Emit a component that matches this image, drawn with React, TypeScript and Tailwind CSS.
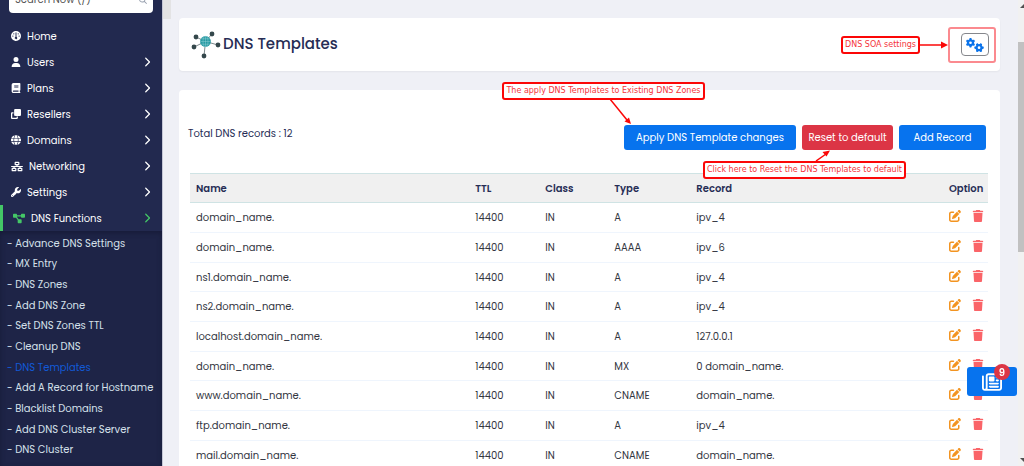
import {
    FaBook,
    FaChevronRight,
    FaClone,
    FaDiagramProject,
    FaGauge,
    FaGears,
    FaGlobe,
    FaMagnifyingGlass,
    FaNetworkWired,
    FaPenToSquare,
    FaRegNewspaper,
    FaTrash,
    FaUser,
    FaWrench,
} from 'react-icons/fa6'
import clsx from 'clsx'
import type { ReactNode } from 'react'
import type { IconType } from 'react-icons'

type MenuItem = {
    label: string
    icon: IconType
    wide?: boolean
    active?: boolean
    leaf?: boolean
}

const menu: MenuItem[] = [
    { label: 'Home', icon: FaGauge, leaf: true },
    { label: 'Users', icon: FaUser },
    { label: 'Plans', icon: FaBook },
    { label: 'Resellers', icon: FaClone },
    { label: 'Domains', icon: FaGlobe },
    { label: 'Networking', icon: FaNetworkWired, wide: true },
    { label: 'Settings', icon: FaWrench },
    { label: 'DNS Functions', icon: FaDiagramProject, wide: true, active: true },
]

const dnsLinks = [
    'Advance DNS Settings',
    'MX Entry',
    'DNS Zones',
    'Add DNS Zone',
    'Set DNS Zones TTL',
    'Cleanup DNS',
    'DNS Templates',
    'Add A Record for Hostname',
    'Blacklist Domains',
    'Add DNS Cluster Server',
    'DNS Cluster',
]

const records = [
    { name: 'domain_name.', type: 'A', record: 'ipv_4' },
    { name: 'domain_name.', type: 'AAAA', record: 'ipv_6' },
    { name: 'ns1.domain_name.', type: 'A', record: 'ipv_4' },
    { name: 'ns2.domain_name.', type: 'A', record: 'ipv_4' },
    { name: 'localhost.domain_name.', type: 'A', record: '127.0.0.1' },
    { name: 'domain_name.', type: 'MX', record: '0 domain_name.' },
    { name: 'www.domain_name.', type: 'CNAME', record: 'domain_name.' },
    { name: 'ftp.domain_name.', type: 'A', record: 'ipv_4' },
    { name: 'mail.domain_name.', type: 'CNAME', record: 'domain_name.' },
]

function Sidebar() {
    return (
        <aside className="flex w-[163px] shrink-0 flex-col border-r border-[#c5c7d6] bg-[#22294f] text-white">
            <div className="mx-[9px] -mt-3.5 mb-2.5 flex h-[27px] shrink-0 items-center rounded bg-white px-1.5">
                <input
                    type="search"
                    aria-label="Search"
                    placeholder="Search Now (/)"
                    className="min-w-0 flex-1 text-[10px] outline-none placeholder:text-[#555]"
                />
                <FaMagnifyingGlass className="size-2 text-gray-400" />
            </div>
            <nav className="flex flex-1 flex-col">
                {menu.map(({ label, icon: Icon, wide, active, leaf }) => (
                    <a
                        key={label}
                        href="#"
                        className={clsx(
                            'flex h-[26px] shrink-0 items-center pr-2.5 text-[10px]',
                            active
                                ? 'border-l-3 border-[#44c767] pl-2.5'
                                : 'pl-[11px]'
                        )}
                    >
                        <Icon
                            className={clsx(
                                'mr-1.5 shrink-0',
                                wide ? 'h-[11px] w-3' : 'size-2.5',
                                active && 'text-[#44c767]'
                            )}
                        />
                        <span className="flex-1">{label}</span>
                        {!leaf && (
                            <FaChevronRight
                                className={clsx(
                                    'size-2.5',
                                    active && 'text-[#44c767]'
                                )}
                            />
                        )}
                    </a>
                ))}
                <ul className="grid flex-1 auto-rows-fr bg-[#1e2447] pt-0.5 pb-1.5 pl-[7px] text-[10px] text-[#d5e0ea] shadow-[inset_0_2px_5px_#171b38]">
                    {dnsLinks.map((link) => (
                        <li key={link} className="flex items-center">
                            <a
                                href="#"
                                className={clsx(
                                    link === 'DNS Templates' && 'text-[#1259d6]'
                                )}
                            >
                                - {link}
                            </a>
                        </li>
                    ))}
                </ul>
            </nav>
        </aside>
    )
}

function DnsLogo() {
    const nodes = [
        [21, 4],
        [5, 7],
        [3, 17],
        [27, 15],
        [13, 26],
    ]
    return (
        <svg viewBox="0 0 30 29" className="h-[29px] w-[30px]" aria-hidden="true">
            <g stroke="#5d6b70" strokeWidth="0.8">
                {nodes.map(([x, y]) => (
                    <line key={x} x1="14.5" y1="11.5" x2={x} y2={y} />
                ))}
            </g>
            <g fill="#34474b">
                {nodes.map(([x, y]) => (
                    <circle key={x} cx={x} cy={y} r="2.4" />
                ))}
            </g>
            <circle cx="14.5" cy="11.5" r="5.4" fill="#269aa3" />
            <g fill="none" stroke="#a5dade" strokeWidth="0.4">
                <ellipse cx="14.5" cy="11.5" rx="2.5" ry="5.2" />
                <path d="M14.5 6.2v10.6M9.2 11.5h10.6M10.2 8.8h8.6M10.2 14.2h8.6" />
            </g>
        </svg>
    )
}

function Callout({
    className,
    children,
}: {
    className: string
    children: ReactNode
}) {
    return (
        <span
            className={clsx(
                "absolute z-10 flex h-[18px] items-center justify-center rounded-[3px] border-2 border-[#fb0707] bg-white font-['DejaVu_Sans',sans-serif] text-[8px] whitespace-nowrap text-[#f5333a]",
                className
            )}
        >
            {children}
        </span>
    )
}

function PageHeader() {
    return (
        <header className="flex h-[53px] shrink-0 items-center justify-between rounded bg-white pr-1 pl-3 shadow-xs">
            <h1 className="flex items-center gap-0.5 text-[15px] font-medium text-[#262d55]">
                <DnsLogo />
                DNS Templates
            </h1>
            <div className="relative flex h-9 w-12 items-center justify-end rounded-[3px] border-2 border-[#fb8a8f] pr-[5px]">
                <Callout className="right-[74px] w-[79px]">
                    DNS SOA settings
                </Callout>
                <svg
                    viewBox="0 0 30 8"
                    className="absolute right-[46px] h-2 w-[30px]"
                    aria-hidden="true"
                >
                    <path d="M0 4h24" stroke="#fb0707" strokeWidth="1.5" />
                    <path d="M23 0.5v7l7-3.5z" fill="#fb0707" />
                </svg>
                <button
                    type="button"
                    aria-label="DNS SOA settings"
                    className="flex h-[23px] w-7 items-center justify-center rounded border border-[#85878c] text-[#0a73eb]"
                >
                    <FaGears className="size-[18px]" />
                </button>
            </div>
        </header>
    )
}

function Toolbar() {
    return (
        <div className="flex items-center justify-between pr-0.5">
            <p className="-ml-0.5 pb-2 text-[10px] text-[#262d55]">
                Total DNS records : 12
            </p>
            <div className="relative flex gap-1.5 text-[10px] text-white">
                <Callout className="right-[281px] bottom-[50px] w-[203px]">
                    The apply DNS Templates to Existing DNS Zones
                </Callout>
                <svg
                    viewBox="0 0 24 26"
                    className="absolute right-[353px] bottom-[25px] h-[26px] w-6"
                    aria-hidden="true"
                >
                    <path d="M1 0l17 21" stroke="#fb0707" strokeWidth="1.5" />
                    <path d="M22 25l-6.500-2.500 4.500-4z" fill="#fb0707" />
                </svg>
                <button
                    type="button"
                    className="h-[25px] w-[172px] rounded-[3px] bg-[#0773ee]"
                >
                    Apply DNS Template changes
                </button>
                <button
                    type="button"
                    className="h-[25px] w-[91px] rounded-[3px] bg-[#dc3545]"
                >
                    Reset to default
                </button>
                <button
                    type="button"
                    className="h-[25px] w-[87px] rounded-[3px] bg-[#0773ee]"
                >
                    Add Record
                </button>
                <svg
                    viewBox="0 0 16 11"
                    className="absolute top-[25px] right-[155px] h-[11px] w-4"
                    aria-hidden="true"
                >
                    <path d="M1 11l10-7" stroke="#fb0707" strokeWidth="1.5" />
                    <path d="M15 0.500l-3.500 6-4-4.500z" fill="#fb0707" />
                </svg>
                <Callout className="top-9 right-20 w-[203px]">
                    Click here to Reset the DNS Templates to default
                </Callout>
            </div>
        </div>
    )
}

function RecordsTable() {
    return (
        <table className="mt-[23px] w-full table-fixed text-left text-[10px] text-[#33363f]">
            <thead className="border-y border-[#cfe3e4] bg-[#f0f0f0] text-[#262d55]">
                <tr className="h-[29px] [&>th]:px-1.5 [&>th]:font-semibold">
                    <th className="w-[35%]">Name</th>
                    <th className="w-[70px]">TTL</th>
                    <th className="w-[69px]">Class</th>
                    <th className="w-[82px]">Type</th>
                    <th>Record</th>
                    <th className="w-[45px]">Option</th>
                </tr>
            </thead>
            <tbody>
                {records.map(({ name, type, record }, i) => (
                    <tr
                        key={i}
                        className="h-[30px] border-b border-[#eff5fd] nth-[3n]:h-[29px] [&>td]:px-1.5"
                    >
                        <td>{name}</td>
                        <td>14400</td>
                        <td>IN</td>
                        <td>{type}</td>
                        <td>{record}</td>
                        <td>
                            <div className="flex items-center gap-[11px] pb-[3px]">
                                <button
                                    type="button"
                                    aria-label="Edit record"
                                    className="text-[#f39421]"
                                >
                                    <FaPenToSquare className="size-3" />
                                </button>
                                <button
                                    type="button"
                                    aria-label="Delete record"
                                    className="text-[#fa6468]"
                                >
                                    <FaTrash className="size-3" />
                                </button>
                            </div>
                        </td>
                    </tr>
                ))}
            </tbody>
        </table>
    )
}

function Scrollbar() {
    return (
        <div className="relative flex w-1.5 shrink-0 flex-col justify-between overflow-hidden bg-[#f1f1f1]">
            <span className="mt-1 ml-0.5 border-x-4 border-b-4 border-x-transparent border-b-[#505050]" />
            <span className="absolute top-[9%] h-[45%] w-full bg-[#c1c1c1]" />
            <span className="mb-1 ml-0.5 border-x-4 border-t-4 border-x-transparent border-t-[#505050]" />
        </div>
    )
}

export default function App() {
    return (
        <div className="flex h-screen overflow-hidden bg-[#eff0f6] font-['Poppins','Inter',sans-serif]">
            <Sidebar />
            <main className="relative flex min-w-0 flex-1 flex-col gap-[19px] pt-[18px] pr-[18px] pl-4">
                <span className="absolute top-0 left-0 h-[19px] w-2 bg-[#e3e3e4]" />
                <PageHeader />
                <section className="flex-1 rounded-t bg-white pt-[35px] pr-3 pl-[11px]">
                    <Toolbar />
                    <RecordsTable />
                </section>
            </main>
            <Scrollbar />
            <button
                type="button"
                aria-label="News"
                className="fixed right-[7px] bottom-[70px] flex h-[29px] w-[50px] items-center justify-center rounded-[3px] bg-[#0773ee] text-white"
            >
                <FaRegNewspaper className="size-5" />
                <span className="absolute -top-[3px] right-[7px] flex size-4 items-center justify-center rounded-full bg-[#dc3545] text-[10px] font-semibold">
                    9
                </span>
            </button>
        </div>
    )
}
